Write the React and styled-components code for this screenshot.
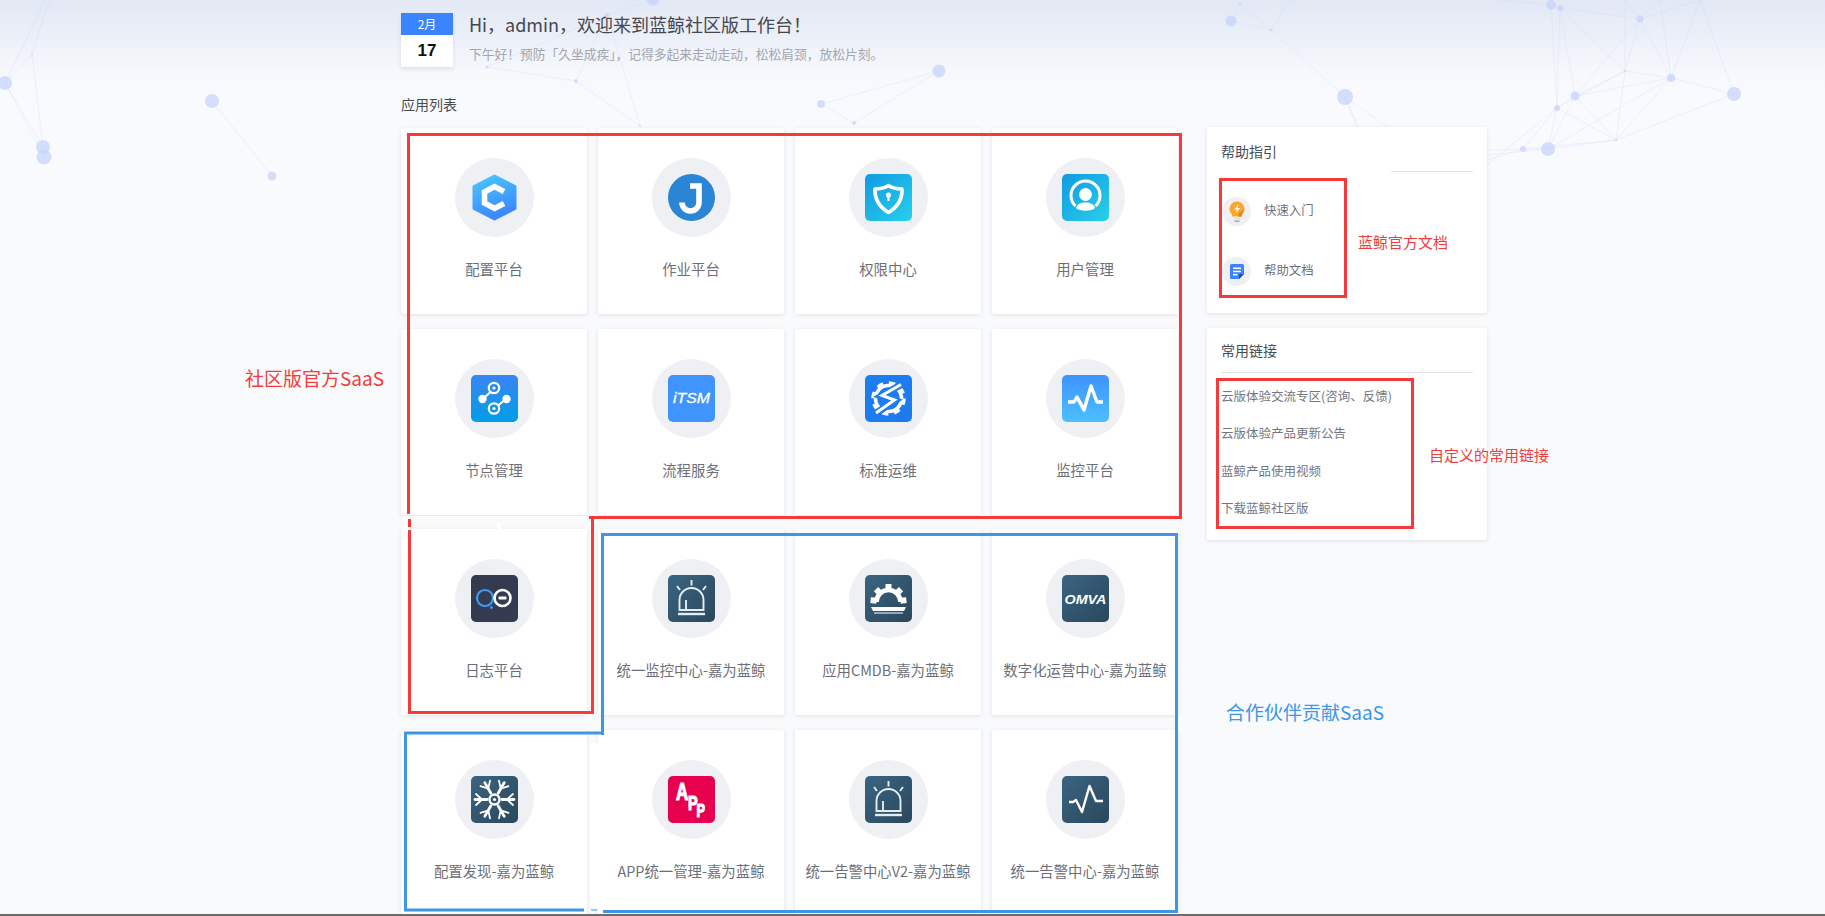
import styled, { createGlobalStyle } from "styled-components";

const FONT = `"Noto Sans CJK SC", "Noto Sans", sans-serif`;

const GlobalStyle = createGlobalStyle`
  html, body {
    margin: 0;
    padding: 0;
    background: #f9fafc;
  }
  body {
    font-family: ${FONT};
  }
`;

const Page = styled.div`
  position: relative;
  width: 1825px;
  height: 916px;
  overflow: hidden;
  box-sizing: border-box;
  padding: 13px 0 0 401px;
  background: linear-gradient(180deg, #e2e8f4 0, #ebeff8 35px, #f6f8fc 72px, #f9fafd 98px, #f9fafc 100%);
`;

const Backdrop = styled.svg`
  position: absolute;
  top: 0;
  left: 0;
  width: 1825px;
  height: 916px;
`;

const Overlay = styled(Backdrop)`
  z-index: 2;
  pointer-events: none;
`;

const Content = styled.div`
  position: relative;
  z-index: 1;
`;

const Greeting = styled.header`
  display: flex;
  gap: 16px;
  height: 54px;
`;

const DateBox = styled.div`
  width: 52px;
  height: 54px;
  background: #fff;
  box-shadow: 0 2px 4px rgba(0, 0, 0, 0.1);
  text-align: center;
`;

const Month = styled.div`
  height: 22px;
  line-height: 22px;
  font-size: 12px;
  color: #fff;
  background: #3a84ff;
`;

const Day = styled.div`
  height: 32px;
  line-height: 32px;
  font-size: 17px;
  font-weight: 700;
  font-family: "Liberation Sans", sans-serif;
  color: #111;
`;

const GreetingText = styled.div`
  display: flex;
  flex-direction: column;
`;

const Title = styled.h1`
  margin: -1px 0 0;
  height: 24px;
  line-height: 24px;
  font-size: 18px;
  font-weight: 400;
  color: #45474f;
`;

const Subtitle = styled.p`
  margin: 9px 0 0;
  line-height: 18px;
  font-size: 12.75px;
  color: #a3a6ae;
`;

const SectionTitle = styled.h2`
  margin: 25px 0 0;
  height: 25px;
  line-height: 24px;
  font-size: 14px;
  font-weight: 400;
  color: #4a4c55;
`;

const Body = styled.div`
  display: flex;
  gap: 29px;
  margin-top: 11px;
`;

const AppGrid = styled.div`
  display: grid;
  grid-template-columns: repeat(4, 186px);
  grid-auto-rows: 186px;
  column-gap: 11px;
  row-gap: 14.67px;
`;

const AppCard = styled.div`
  display: flex;
  flex-direction: column;
  align-items: center;
  padding-top: 30px;
  box-sizing: border-box;
  background: #fff;
  border-radius: 2px;
  box-shadow: 0 1px 4px rgba(40, 50, 80, 0.12);
`;

const IconCircle = styled.div`
  display: flex;
  align-items: center;
  justify-content: center;
  flex: none;
  width: ${(props) => props.$size}px;
  height: ${(props) => props.$size}px;
  border-radius: 50%;
  background: #eff0f4;
`;

const AppName = styled.div`
  margin-top: 22px;
  line-height: 20px;
  font-size: 14.4px;
  color: #6d6f78;
  white-space: nowrap;
`;

const Sidebar = styled.aside`
  display: flex;
  flex-direction: column;
  gap: 15px;
  width: 280px;
  margin-top: -1px;
`;

const Panel = styled.section`
  height: ${(props) => props.$height}px;
  box-sizing: border-box;
  padding: ${(props) => props.$top}px 14px 0;
  background: #fff;
  border-radius: 2px;
  box-shadow: 0 1px 4px rgba(40, 50, 80, 0.12);
`;

const PanelTitle = styled.h3`
  margin: 0;
  line-height: 20px;
  font-size: 14px;
  font-weight: 400;
  color: #4a4c55;
`;

const Divider = styled.div`
  height: 1px;
  margin-top: ${(props) => props.$top}px;
  margin-left: ${(props) => props.$indent || 0}px;
  background: #dfe1e8;
`;

const HelpList = styled.div`
  display: flex;
  flex-direction: column;
  gap: 31px;
  margin: 25px 0 0 1px;
`;

const HelpItem = styled.div`
  display: flex;
  align-items: center;
  gap: 13px;
  font-size: 12.4px;
  color: #6f717a;
`;

const HelpLabel = styled.span`
  margin-top: -4px;
`;

const LinkList = styled.div`
  margin-top: 4px;
`;

const LinkItem = styled.div`
  line-height: 37.33px;
  font-size: 12.5px;
  color: #74767f;
  white-space: nowrap;
`;

const Note = styled.div`
  position: absolute;
  z-index: 3;
  left: ${(props) => props.$x}px;
  top: ${(props) => props.$y}px;
  transform: translateY(-50%);
  font-size: ${(props) => props.$size}px;
  line-height: 1.3;
  color: ${(props) => props.$color};
  white-space: nowrap;
`;

const BottomEdge = styled.div`
  position: absolute;
  z-index: 4;
  left: 0;
  right: 0;
  bottom: 0;
  height: 2px;
  background: #6c6c6c;
`;

const Grad = ({ id, from, to, x2 = 1, y2 = 1 }) => (
  <defs>
    <linearGradient id={id} x1="0" y1="0" x2={x2} y2={y2}>
      <stop offset="0" stopColor={from} />
      <stop offset="1" stopColor={to} />
    </linearGradient>
  </defs>
);

const Tile = ({ id, from, to, x2, y2, children }) => (
  <svg width="47" height="47" viewBox="0 0 47 47">
    <Grad id={id} from={from} to={to} x2={x2} y2={y2} />
    <rect width="47" height="47" rx="5" fill={`url(#${id})`} />
    {children}
  </svg>
);

const SlateTile = ({ id, children }) => (
  <Tile id={id} from="#3b6482" to="#2a485c">
    {children}
  </Tile>
);

const ConfigIcon = () => (
  <svg width="47" height="47" viewBox="0 0 47 47">
    <Grad id="cfg" from="#4bc8ff" to="#3c88ff" x2={0.3} />
    <path
      d="M23.5 2 L44 12.5 V34.5 L23.5 45 L3 34.5 V12.5 Z"
      fill="url(#cfg)"
      stroke="url(#cfg)"
      strokeWidth="3"
      strokeLinejoin="round"
    />
    <path
      d="M33 17.5 L23.5 12.5 L13.5 18 V29 L23.5 34.5 L33 29.5"
      fill="none"
      stroke="#fff"
      strokeWidth="5.5"
    />
  </svg>
);

const JobIcon = () => (
  <svg width="47" height="47" viewBox="0 0 47 47">
    <circle cx="23.5" cy="23.5" r="23.5" fill="#2b85d5" />
    <path
      d="M22 12 H31 V28.5 A8.5 8.5 0 0 1 14 28.5"
      fill="none"
      stroke="#fff"
      strokeWidth="5.6"
    />
  </svg>
);

const AuthIcon = () => (
  <Tile id="auth" from="#129ae2" to="#28d0ea">
    <path
      d="M23.5 11.5 C28 14.5 33 15 37 15 C37.5 24 34 32 23.5 38.5 C13 32 9.5 24 10 15 C14 15 19 14.5 23.5 11.5 Z"
      fill="none"
      stroke="#fff"
      strokeWidth="3.6"
      strokeLinejoin="round"
    />
    <circle cx="23.5" cy="21" r="2.5" fill="#fff" />
    <path d="M22.3 22 H24.7 L24.5 27 H22.5 Z" fill="#fff" />
  </Tile>
);

const UserIcon = () => (
  <Tile id="user" from="#129ae2" to="#28d0ea">
    <path
      d="M13.5 32 A14.5 14.5 0 1 1 33.5 32"
      fill="none"
      stroke="#fff"
      strokeWidth="3"
    />
    <circle cx="23.5" cy="20.5" r="6.4" fill="#fff" />
    <path d="M14 34 C15 30 19 28.5 23.5 28.5 C28 28.5 32 30 33 34 C30 37.5 17 37.5 14 34 Z" fill="#fff" />
  </Tile>
);

const NodeIcon = () => (
  <Tile id="node" from="#3a84f2" to="#009ee8" x2={0} y2={1}>
    <g stroke="#fff" strokeWidth="2.2" fill="none">
      <path d="M12 24 L20 16.5" />
      <path d="M35 24 L27 30.5" />
      <circle cx="23" cy="13" r="5.2" />
      <circle cx="23" cy="33.5" r="5.2" />
    </g>
    <circle cx="23" cy="13" r="1.6" fill="#fff" />
    <circle cx="23" cy="33.5" r="1.6" fill="#fff" />
    <circle cx="11.5" cy="24" r="4.2" fill="#fff" />
    <circle cx="35.5" cy="24" r="4.2" fill="#fff" />
  </Tile>
);

const ItsmIcon = () => (
  <Tile id="itsm" from="#3f94ff" to="#3f94ff">
    <text
      x="23.5"
      y="28"
      textAnchor="middle"
      fontFamily="Liberation Sans, sans-serif"
      fontStyle="italic"
      fontSize="14"
      textLength="37"
      lengthAdjust="spacingAndGlyphs"
      fill="#fff"
      stroke="#fff"
      strokeWidth="0.3"
    >
      iTSM
    </text>
  </Tile>
);

const OpsIcon = () => (
  <Tile id="ops" from="#1c7ef2" to="#1c7aee">
    <circle cx="23.5" cy="23.5" r="13" fill="none" stroke="#fff" strokeWidth="3.6" />
    <circle
      cx="23.5"
      cy="23.5"
      r="15.8"
      fill="none"
      stroke="#fff"
      strokeWidth="3"
      strokeDasharray="6.4 6"
    />
    <path d="M37 9 L16.5 21 L30 25.5 L10 39" fill="none" stroke="#1c7cf0" strokeWidth="7" />
    <path d="M36 9.5 L17 20.5 L29.5 25 L11 38" fill="none" stroke="#fff" strokeWidth="3" />
  </Tile>
);

const MonitorIcon = () => (
  <Tile id="mon" from="#3e94ff" to="#4cbfff" x2={0} y2={1}>
    <path
      d="M6 27 H12 L15 22 L22 35 L29 11 L35 27 H41"
      fill="none"
      stroke="#fff"
      strokeWidth="3.4"
      strokeLinejoin="round"
    />
  </Tile>
);

const LogIcon = () => (
  <Tile id="log" from="#343a4e" to="#353b50">
    <circle cx="14" cy="23" r="8" fill="none" stroke="#3f9cf5" strokeWidth="2.2" />
    <circle cx="20.5" cy="32.5" r="1.4" fill="#3f9cf5" />
    <circle cx="31.5" cy="23" r="8" fill="none" stroke="#fff" strokeWidth="2.6" />
    <rect x="27.5" y="21.5" width="8" height="3" rx="1" fill="#fff" />
  </Tile>
);

const BeaconIcon = ({ id }) => (
  <SlateTile id={id}>
    <g fill="none" stroke="#e6edf2" strokeWidth="1.9">
      <path d="M11.5 35 V25 A12 12 0 0 1 35.5 25 V35 Z" />
      <path d="M18 35 V25" />
      <path d="M23.5 5 V10.5 M9 11 L12 15 M38 11 L35 15" />
      <path d="M10 39 H37" strokeWidth="2.4" />
    </g>
  </SlateTile>
);

const CROWN_TEETH = [-84, -44, 0, 44, 84];

const CmdbIcon = () => (
  <SlateTile id="cmdb">
    <path
      d="M11.5 27 A12 12 0 0 1 35.5 27"
      fill="none"
      stroke="#fff"
      strokeWidth="4.6"
    />
    <g fill="#fff">
      {CROWN_TEETH.map((deg) => (
        <rect key={deg} x="20.5" y="9" width="6" height="6" transform={`rotate(${deg} 23.5 27)`} />
      ))}
    </g>
    <path d="M6 32 H41 L39 36 H8 Z" fill="#fff" />
    <path d="M9 38 H38" stroke="#dbe4ea" strokeWidth="1.2" />
  </SlateTile>
);

const OmvaIcon = () => (
  <SlateTile id="omva">
    <text
      x="23.5"
      y="28.5"
      textAnchor="middle"
      fontFamily="Liberation Sans, sans-serif"
      fontWeight="700"
      fontStyle="italic"
      fontSize="13"
      textLength="42"
      lengthAdjust="spacingAndGlyphs"
      fill="#fff"
    >
      OMVA
    </text>
  </SlateTile>
);

const SNOW_ARMS = [30, 90, 150, 210, 270, 330];

const SnowIcon = () => (
  <SlateTile id="snow">
    <g fill="none" stroke="#fff" strokeLinecap="round">
      {SNOW_ARMS.map((deg) => (
        <g key={deg} transform={`rotate(${deg} 23.5 23.5)`}>
          <path d="M23.5 16 V4" strokeWidth="2.8" />
          <path d="M23.5 11 L18 5 M23.5 11 L29 5" strokeWidth="1.8" />
        </g>
      ))}
      <circle cx="23.5" cy="23.5" r="5" strokeWidth="2.4" />
    </g>
    <circle cx="23.5" cy="23.5" r="1.6" fill="#fff" />
  </SlateTile>
);

const AppIcon = () => (
  <Tile id="appi" from="#e6004e" to="#e6004e">
    <g transform="scale(0.85 1.2)">
      <text
        fontFamily="Liberation Sans, sans-serif"
        fontWeight="700"
        stroke="#fff"
        strokeWidth="1"
        fill="#fff"
      >
        <tspan x="9.4" y="20" fontSize="20">A</tspan>
        <tspan x="23.5" y="28.3" fontSize="17">P</tspan>
        <tspan x="33.5" y="34.2" fontSize="15">P</tspan>
      </text>
    </g>
  </Tile>
);

const PulseIcon = () => (
  <SlateTile id="pulse">
    <path
      d="M7 26 H11 L14 24 L20 36 L27.5 10 L34 25 H41"
      fill="none"
      stroke="#fff"
      strokeWidth="2.4"
      strokeLinejoin="round"
    />
  </SlateTile>
);

const BulbIcon = () => (
  <svg width="18" height="22" viewBox="0 0 18 22">
    <path d="M9 0.5 A7.5 7.5 0 0 1 14 13.5 V15.5 H4 V13.5 A7.5 7.5 0 0 1 9 0.5 Z" fill="#f9a732" />
    <path d="M10 3.5 L6.5 8.5 H9 L8 12 L12 7 H10 Z" fill="#fff" />
    <path d="M14 13.5 L16.5 8 L10 13 L10 15.5 H14 Z" fill="#e58a12" />
    <rect x="5.5" y="17" width="7" height="1.2" fill="#d8dbe0" />
    <rect x="6.5" y="19.5" width="5" height="1.2" fill="#8f949e" />
  </svg>
);

const DocIcon = () => (
  <svg width="14" height="15" viewBox="0 0 14 15">
    <path d="M1.5 0 H12.5 A1.5 1.5 0 0 1 14 1.5 V10 L9 15 H1.5 A1.5 1.5 0 0 1 0 13.5 V1.5 A1.5 1.5 0 0 1 1.5 0 Z" fill="#3a84ff" />
    <rect x="3" y="3.5" width="8" height="1.5" fill="#fff" />
    <rect x="3" y="6.7" width="8" height="1.5" fill="#fff" />
    <rect x="3" y="9.9" width="4.5" height="1.5" fill="#fff" />
    <path d="M14 10 L9 15 V11 A1 1 0 0 1 10 10 Z" fill="#1d4fb8" />
  </svg>
);

const APPS = [
  { name: "配置平台", icon: <ConfigIcon /> },
  { name: "作业平台", icon: <JobIcon /> },
  { name: "权限中心", icon: <AuthIcon /> },
  { name: "用户管理", icon: <UserIcon /> },
  { name: "节点管理", icon: <NodeIcon /> },
  { name: "流程服务", icon: <ItsmIcon /> },
  { name: "标准运维", icon: <OpsIcon /> },
  { name: "监控平台", icon: <MonitorIcon /> },
  { name: "日志平台", icon: <LogIcon /> },
  { name: "统一监控中心-嘉为蓝鲸", icon: <BeaconIcon id="beacon1" /> },
  { name: "应用CMDB-嘉为蓝鲸", icon: <CmdbIcon /> },
  { name: "数字化运营中心-嘉为蓝鲸", icon: <OmvaIcon /> },
  { name: "配置发现-嘉为蓝鲸", icon: <SnowIcon /> },
  { name: "APP统一管理-嘉为蓝鲸", icon: <AppIcon /> },
  { name: "统一告警中心V2-嘉为蓝鲸", icon: <BeaconIcon id="beacon2" /> },
  { name: "统一告警中心-嘉为蓝鲸", icon: <PulseIcon /> },
];

const LINKS = [
  "云版体验交流专区(咨询、反馈)",
  "云版体验产品更新公告",
  "蓝鲸产品使用视频",
  "下载蓝鲸社区版",
];

const NET_NODES = [
  [5, 83, 7], [43, 147, 7], [44, 157, 7.5], [212, 101, 7], [272, 176, 4.5], [32, 54, 1],
  [487, 67, 1.5], [576, 81, 2], [640, 126, 1], [653, 0, 6], [607, 15, 2],
  [939, 71, 6.5], [821, 104, 4], [854, 123, 2],
  [1231, 21, 5.5], [1240, 4, 1.5], [1271, 30, 1.5], [1345, 97, 8],
  [1551, 5, 5], [1560, 8, 3], [1640, 19, 3.5], [1625, 71, 1], [1671, 78, 4],
  [1734, 94, 7], [1575, 96, 4.5], [1557, 108, 3], [1616, 140, 1], [1523, 149, 3], [1548, 149, 7],
];

const NET_LINES = [
  [5, 83, 32, 54], [32, 54, 43, 147], [5, 83, 43, 147], [5, 83, 44, 157], [32, 54, 49, 0], [5, 83, 45, 0],
  [212, 101, 272, 176],
  [487, 67, 576, 81], [576, 81, 640, 126], [576, 81, 607, 15], [607, 15, 653, 0], [487, 67, 607, 15],
  [607, 15, 640, 126], [821, 104, 854, 123], [854, 123, 939, 71], [821, 104, 939, 71],
  [1231, 21, 1271, 30], [1231, 21, 1240, 4], [1240, 4, 1271, 30], [1271, 30, 1290, 0],
  [1271, 30, 1345, 97], [1345, 97, 1360, 130], [1345, 97, 1392, 130], [1345, 97, 1358, 130],
  [1551, 5, 1557, 108], [1551, 5, 1500, 0], [1560, 8, 1640, 19], [1560, 8, 1575, 96], [1560, 8, 1625, 71],
  [1560, 8, 1557, 108], [1640, 19, 1625, 71], [1640, 19, 1671, 78], [1640, 19, 1575, 96], [1625, 71, 1671, 78],
  [1625, 71, 1575, 96], [1625, 71, 1616, 140], [1625, 71, 1557, 108], [1671, 78, 1734, 94], [1671, 78, 1575, 96],
  [1671, 78, 1616, 140], [1671, 78, 1548, 149], [1575, 96, 1557, 108], [1575, 96, 1548, 149], [1575, 96, 1616, 140],
  [1557, 108, 1616, 140], [1557, 108, 1523, 149], [1557, 108, 1548, 149], [1523, 149, 1548, 149],
  [1548, 149, 1616, 140], [1523, 149, 1616, 140], [1616, 140, 1734, 94], [1640, 19, 1625, 0], [1640, 19, 1660, 0],
  [1640, 19, 1700, 0], [1671, 78, 1700, 0], [1671, 78, 1660, 0], [1734, 94, 1700, 0], [1625, 71, 1625, 0],
  [1523, 149, 1487, 160], [1548, 149, 1487, 155], [1523, 149, 1487, 150], [1557, 108, 1487, 165],
];

function Network() {
  return (
    <Backdrop viewBox="0 0 1825 916">
      <g stroke="#c9d5fa" strokeOpacity="0.28" strokeWidth="1">
        {NET_LINES.map(([x1, y1, x2, y2], i) => (
          <line key={i} x1={x1} y1={y1} x2={x2} y2={y2} />
        ))}
      </g>
      <g fill="#c4d2fb" fillOpacity="0.7">
        {NET_NODES.map(([cx, cy, r], i) => (
          <circle key={i} cx={cx} cy={cy} r={r} />
        ))}
      </g>
    </Backdrop>
  );
}

// the hand-drawn red and blue frames, and the white patches around them
function Frames() {
  return (
    <Overlay viewBox="0 0 1825 916">
      <g fill="#fff">
        <rect x="403" y="516" width="183" height="3" />
        <rect x="403" y="516" width="6" height="14" />
        <rect x="497" y="523" width="4" height="7" />
        <rect x="590" y="743" width="8" height="165" />
      </g>
      <g fill="none" stroke="#f63a3a" strokeWidth="3">
        <path d="M408.5 514 V134.5 H1180.5 V517.5 H589" />
        <path d="M409.5 519 V527" />
        <path d="M592.5 517.5 V712.5 H409.5 V530" />
        <rect x="1220.5" y="179.5" width="125" height="117" />
        <rect x="1217.5" y="379.5" width="195" height="148" />
      </g>
      <g fill="none" stroke="#3d96e6" strokeWidth="3">
        <path d="M602.5 735 V534.5 H1176.5 V911.5 H603" />
        <path d="M604 733 H405.5 V910 H584" />
        <path d="M591 910 H597" strokeWidth="1" />
      </g>
    </Overlay>
  );
}

export default function App() {
  return (
    <Page>
      <GlobalStyle />
      <Network />
      <Content>
        <Greeting>
          <DateBox>
            <Month>2月</Month>
            <Day>17</Day>
          </DateBox>
          <GreetingText>
            <Title>Hi，admin，欢迎来到蓝鲸社区版工作台！</Title>
            <Subtitle>下午好！预防「久坐成疾」，记得多起来走动走动，松松肩颈，放松片刻。</Subtitle>
          </GreetingText>
        </Greeting>
        <SectionTitle>应用列表</SectionTitle>
        <Body>
          <AppGrid>
            {APPS.map((app) => (
              <AppCard key={app.name}>
                <IconCircle $size={79}>{app.icon}</IconCircle>
                <AppName>{app.name}</AppName>
              </AppCard>
            ))}
          </AppGrid>
          <Sidebar>
            <Panel $height={186} $top={14}>
              <PanelTitle>帮助指引</PanelTitle>
              <Divider $top={10} $indent={170} />
              <HelpList>
                <HelpItem>
                  <IconCircle $size={29}>
                    <BulbIcon />
                  </IconCircle>
                  <HelpLabel>快速入门</HelpLabel>
                </HelpItem>
                <HelpItem>
                  <IconCircle $size={29}>
                    <DocIcon />
                  </IconCircle>
                  <HelpLabel>帮助文档</HelpLabel>
                </HelpItem>
              </HelpList>
            </Panel>
            <Panel $height={212} $top={12}>
              <PanelTitle>常用链接</PanelTitle>
              <Divider $top={12} />
              <LinkList>
                {LINKS.map((link) => (
                  <LinkItem key={link}>{link}</LinkItem>
                ))}
              </LinkList>
            </Panel>
          </Sidebar>
        </Body>
      </Content>
      <Frames />
      <Note $x={245} $y={378} $size={19} $color="#f63a3a">社区版官方SaaS</Note>
      <Note $x={1226} $y={712} $size={19} $color="#3d96e6">合作伙伴贡献SaaS</Note>
      <Note $x={1358} $y={242} $size={15} $color="#f63a3a">蓝鲸官方文档</Note>
      <Note $x={1429} $y={455} $size={15} $color="#f63a3a">自定义的常用链接</Note>
      <BottomEdge />
    </Page>
  );
}
